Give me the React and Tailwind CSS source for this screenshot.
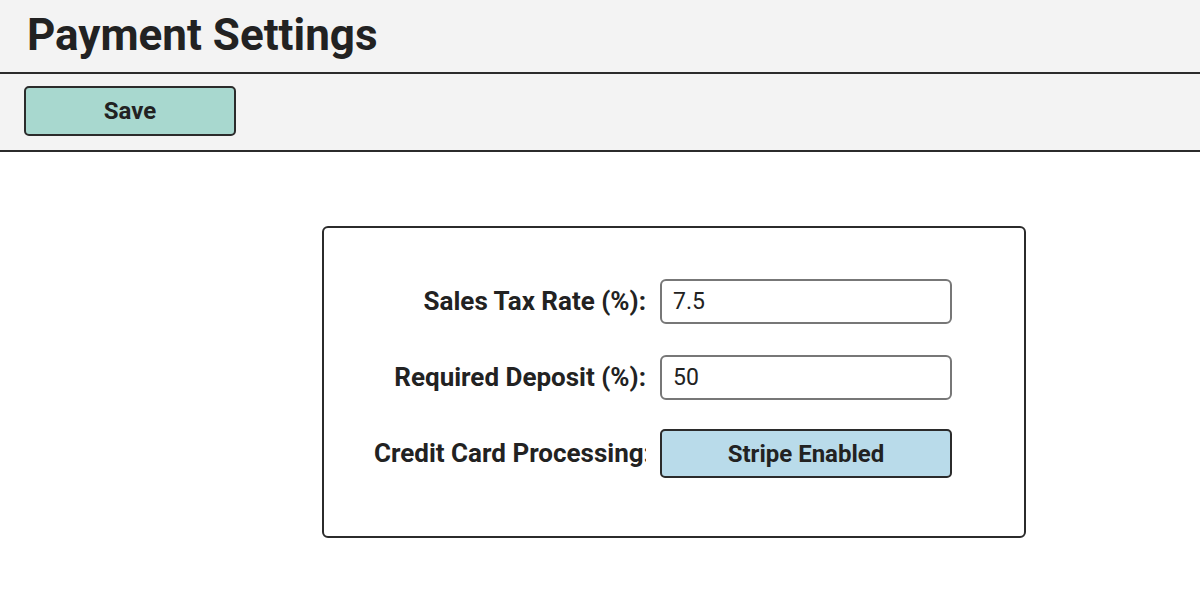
export default function App() {
  return (
    <div className="min-h-screen bg-white text-[#222] font-['Roboto',sans-serif]">
      <div className="bg-[#f3f3f3] h-[74px] px-[27px] pt-[7px] border-b-2 border-[#2b2b2b]">
        <h1 className="text-[44px] font-bold leading-[56px]">Payment Settings</h1>
      </div>
      <div className="bg-[#f3f3f3] h-[78px] px-[24px] pt-[12px] border-b-2 border-[#2b2b2b]">
        <button className="w-[212px] h-[50px] bg-[#a8d8cf] border-2 border-[#2b2b2b] rounded-[5px] text-[24px] font-bold">
          Save
        </button>
      </div>
      <div className="flex pt-[74px] pl-[322px]">
        <div className="w-[704px] h-[312px] border-2 border-[#2b2b2b] rounded-[6px] pl-[50px] pt-[51px]">
          <div className="flex flex-col">
            <div className="flex items-center gap-[14px] h-[45px]">
              <label className="w-[272px] text-right text-[26px] font-bold whitespace-nowrap overflow-hidden">
                Sales Tax Rate (%):
              </label>
              <input
                defaultValue="7.5"
                className="w-[292px] h-[45px] border-2 border-[#777] rounded-[6px] px-[11px] text-[23px] outline-none"
              />
            </div>
            <div className="flex items-center gap-[14px] h-[45px] mt-[31px]">
              <label className="w-[272px] text-right text-[26px] font-bold whitespace-nowrap overflow-hidden">
                Required Deposit (%):
              </label>
              <input
                defaultValue="50"
                className="w-[292px] h-[45px] border-2 border-[#777] rounded-[6px] px-[11px] text-[23px] outline-none"
              />
            </div>
            <div className="flex items-center gap-[14px] h-[49px] mt-[29px]">
              <label className="w-[272px] text-right text-[26px] font-bold whitespace-nowrap overflow-hidden">
                Credit Card Processing:
              </label>
              <button className="w-[292px] h-[49px] bg-[#b9dbea] border-2 border-[#2b2b2b] rounded-[5px] text-[24px] font-bold">
                Stripe Enabled
              </button>
            </div>
          </div>
        </div>
      </div>
    </div>
  )
}
